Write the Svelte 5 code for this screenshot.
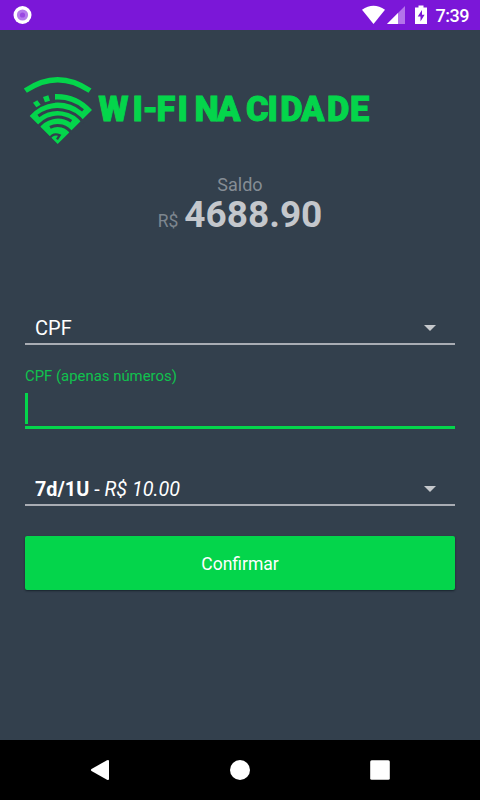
<script>
  let balance = $state('4688.90');
  let cpf = $state('');
</script>

<div class="screen">
  <header class="status">
    <svg width="480" height="30" viewBox="0 0 480 30">
      <circle cx="22.5" cy="15" r="9" fill="#fff" />
      <circle cx="22.5" cy="15" r="5.6" fill="#b57bec" />
      <circle cx="22.5" cy="15" r="2.6" fill="#9a49e2" />
      <path d="M362 9.7Q373.5 1.8 385 9.7L373.5 24Z" fill="#fff" />
      <path d="M387 24L405 6V24Z" fill="#b374ea" />
      <path d="M387 24L398 13V24Z" fill="#fff" />
      <path d="M418.500 5.500H423.500V7.500H427V24H415V7.500H418.500Z" fill="#fff" />
      <path d="M422 10L417.700 16.500H420.500V21.500L424.600 14.800H422Z" fill="#7b17d8" />
      <text x="435.500" y="21.500" class="time" textLength="34">7:39</text>
    </svg>
  </header>

  <main>
    <div class="logo">
      <svg width="360" height="80" viewBox="0 0 360 80" fill="#04d54b">
        <g transform="scale(.33333)">
          <path d="M28 62Q125 -4 222 62" fill="none" stroke="#04d54b" stroke-width="16" />
          <path d="M51 98L64 91L74 104L61 112Z M81 81L97 76L102 92L87 97Z" />
          <path d="M41 138A117 117 0 0 1 117 98V72A143 143 0 0 1 228 120L125 222Z" />
          <g fill="none" stroke="#33404d" stroke-width="9">
            <path d="M112 94A121 121 0 0 1 201 121" />
            <path d="M67 138A97 97 0 0 1 204 159" />
            <path d="M63 176A73 73 0 0 1 166 154" />
            <path d="M102 172A49 49 0 0 1 167 190" />
            <path d="M99 207Q112 187 131 196L123 208" stroke-width="7" />
          </g>
        </g>
        <g class="brand">
          <text x="82.500 116.500 126.500 140.500 161.500" y="51.300">WI-FI</text>
          <text x="178.500 201" y="51.300">NA</text>
          <text x="230 251.500 264.200 285 311 334" y="51.300">CIDADE</text>
        </g>
      </svg>
    </div>

    <section class="balance">
      <div class="label">Saldo</div>
      <div class="amount"><span>R$</span><strong>{balance}</strong></div>
    </section>

    <form onsubmit={(e) => e.preventDefault()}>
      <div class="select first">
        <span>CPF</span>
        <svg width="14" height="8" viewBox="0 0 14 8"><path d="M1 1H13L7 7Z" fill="#c5c8cc" /></svg>
      </div>
      <label for="cpf">CPF (apenas números)</label>
      <div class="field"><i></i><input id="cpf" bind:value={cpf} /></div>
      <div class="select second">
        <span><b>7d/1U</b> - <em>R$ 10.00</em></span>
        <svg width="14" height="8" viewBox="0 0 14 8"><path d="M1 1H13L7 7Z" fill="#c5c8cc" /></svg>
      </div>
      <button>Confirmar</button>
    </form>
  </main>

  <nav>
    <svg width="480" height="60" viewBox="0 0 480 60" fill="#fff">
      <path d="M91.500 29L107 20.200Q109 19.500 109 21V39Q109 40.500 107 39.800L91.500 31Q90.300 30 91.500 29Z" />
      <circle cx="240" cy="30" r="10" />
      <rect x="370.200" y="20.200" width="19.600" height="19.600" rx="1.500" />
    </svg>
  </nav>
</div>

<style>
  :global(body) { margin: 0; background: #33404d; }
  .screen { width: 480px; height: 800px; display: flex; flex-direction: column; background: #33404d; color: #fff; font-family: Roboto, sans-serif; overflow: hidden; }
  svg { display: block; flex-shrink: 0; }
  .status { height: 30px; background: #7b17d8; }
  .time { font: 500 18px Roboto, sans-serif; fill: #fff; }
  main { flex: 1; padding: 40px 25px 0; }
  .logo { margin-left: -9px; }
  .brand text { font: 900 34.5px Roboto, sans-serif; stroke: #04d54b; stroke-width: 0.9px; }
  .balance { display: flex; flex-direction: column; align-items: center; padding-top: 24px; height: 138px; box-sizing: border-box; }
  .label { font-size: 18px; line-height: 22px; color: #858d95; }
  .amount { display: flex; align-items: baseline; gap: 6px; line-height: 38px; color: #c4c7cc; }
  .amount span { font-size: 17.5px; color: #7d868f; }
  .amount strong { font-size: 37px; }
  .select { box-sizing: border-box; border-bottom: 2px solid #a9adb4; display: flex; align-items: center; justify-content: space-between; padding: 0 18px 0 10px; font-size: 20px; }
  .first { margin-top: 24px; height: 33px; }
  label { display: block; margin-top: 21px; font-size: 14.9px; line-height: 20px; color: #10c24e; }
  .field { box-sizing: border-box; height: 43px; border-bottom: 3px solid #04d54b; display: flex; align-items: flex-end; }
  .field i { width: 3px; height: 31px; margin-bottom: 2px; background: #04d54b; }
  input { flex: 1; min-width: 0; height: 31px; border: 0; outline: 0; padding: 0; background: transparent; color: #fff; font: 20px Roboto, sans-serif; }
  .second { margin-top: 43px; height: 34px; padding-top: 2px; font-size: 19.8px; }
  button { display: block; width: 430px; height: 54px; margin-top: 29.5px; padding: 2px 0 0; border: 0; border-radius: 2px; background: #04d54b; color: #fff; font: 17.5px Roboto, sans-serif; box-shadow: 0 1px 2px #18232d; }
  nav { height: 60px; background: #000; }
</style>
